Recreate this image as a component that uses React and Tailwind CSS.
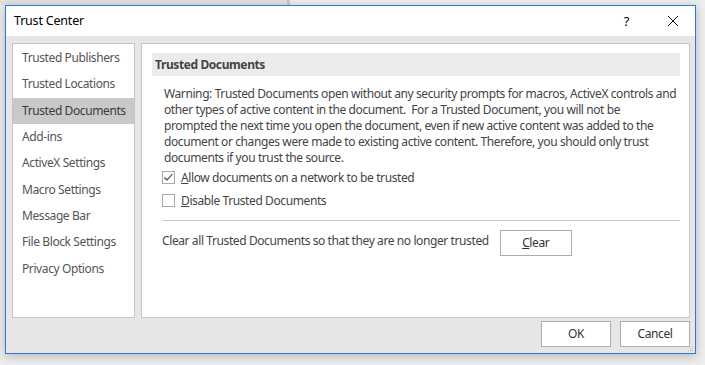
import React from "react";

const navItems = [
  "Trusted Publishers",
  "Trusted Locations",
  "Trusted Documents",
  "Add-ins",
  "ActiveX Settings",
  "Macro Settings",
  "Message Bar",
  "File Block Settings",
  "Privacy Options",
];

const warningLines = [
  "Warning: Trusted Documents open without any security prompts for macros, ActiveX controls and",
  "other types of active content in the document.\u00a0 For a Trusted Document, you will not be",
  "prompted the next time you open the document, even if new active content was added to the",
  "document or changes were made to existing active content. Therefore, you should only trust",
  "documents if you trust the source.",
];

function Checkbox({ checked }) {
  return (
    <span className="w-[13px] h-[13px] border border-[#a8a8a8] bg-white flex items-center justify-center shrink-0">
      {checked && (
        <svg width="11" height="11" viewBox="0 0 11 11">
          <path d="M1.5 5.5 L4 8 L9.5 2" fill="none" stroke="#333" strokeWidth="1.1" />
        </svg>
      )}
    </span>
  );
}

export default function App() {
  return (
    <div
      className="w-[705px] h-[365px] bg-[#efefef] relative overflow-hidden text-[12px] text-[#444] tracking-[-0.4px]"
      style={{ fontFamily: '"Noto Sans", "Segoe UI", sans-serif' }}
    >
      {/* background window hints */}
      <div className="absolute left-0 top-0 w-[290px] h-[5px] bg-[#e2e2e2]" />
      <div className="absolute left-[287px] top-0 w-[3px] h-[5px] bg-[#c8c8c8]" />
      <div className="absolute left-[287px] top-[353px] w-[3px] h-[12px] bg-[#cfcfcf]" />
      <div className="absolute left-0 top-[353px] w-[705px] h-[12px] bg-[#eeeeee]" />

      <div className="absolute left-[5px] top-[5px] w-[691px] h-[349px] border border-[#2b7bd4] bg-[#e6e6e6] flex flex-col shadow-[0_2px_10px_rgba(0,0,0,0.25)]">
        {/* title bar */}
        <div className="h-[30px] bg-white flex items-center pl-[8px] shrink-0">
          <span className="text-[12.5px] text-black tracking-[-0.2px]">Trust Center</span>
          <span className="ml-auto text-[13px] text-black mr-[38px] mt-[1px]">?</span>
          <svg width="12" height="12" viewBox="0 0 12 12" className="mr-[16px]">
            <path d="M1 1 L11 11 M11 1 L1 11" stroke="#111" strokeWidth="1" />
          </svg>
        </div>

        {/* body */}
        <div className="flex flex-col flex-1 pl-[6px] pr-[5px] pt-[7px] pb-[6px]">
          <div className="flex gap-[6px] h-[275px]">
            {/* nav */}
            <div className="w-[123px] h-full bg-white border border-[#c4c4c4] pt-[1px]">
              {navItems.map((item, i) => (
                <div
                  key={item}
                  className={
                    "h-[26.3px] flex items-center pl-[9px] text-[12px] whitespace-nowrap " +
                    (i === 2 ? "bg-[#c9c9c9] text-[#3a3a3a]" : "text-[#555]")
                  }
                >
                  {item}
                </div>
              ))}
            </div>

            {/* content */}
            <div className="flex-1 h-full bg-white border border-[#c4c4c4] pt-[9px] pl-[10px] pr-[9px]">
              <div className="h-[23px] bg-[#ebebeb] flex items-center pl-[3px] font-bold text-[12px] text-[#444]">
                Trusted Documents
              </div>
              <div className="pl-[12px] pt-[10px] leading-[16px] text-[12px] text-[#444]">
                {warningLines.map((l) => (
                  <div key={l} className="whitespace-nowrap">{l}</div>
                ))}
              </div>
              <div className="pl-[10px] flex flex-col">
                <div className="h-[23px] flex items-center gap-[6px]">
                  <Checkbox checked />
                  <span><span className="underline">A</span>llow documents on a network to be trusted</span>
                </div>
                <div className="h-[23px] flex items-center gap-[6px]">
                  <Checkbox />
                  <span><span className="underline">D</span>isable Trusted Documents</span>
                </div>
              </div>
              <div className="ml-[10px] mt-[8px] h-[1px] bg-[#c8c8c8]" />
              <div className="pl-[10px] mt-[9px] flex items-start">
                <span className="mt-[2px]">Clear all Trusted Documents so that they are no longer trusted</span>
                <button className="ml-[11px] w-[72px] h-[26px] border border-[#adadad] bg-white text-[12px] text-[#333]">
                  <span className="underline">C</span>lear
                </button>
              </div>
            </div>
          </div>

          {/* footer */}
          <div className="flex justify-end gap-[9px] mt-[3px]">
            <button className="w-[70px] h-[26px] border border-[#adadad] bg-white text-[12px] text-[#333]">OK</button>
            <button className="w-[70px] h-[26px] border border-[#adadad] bg-white text-[12px] text-[#333]">Cancel</button>
          </div>
        </div>
        <svg width="6" height="6" viewBox="0 0 6 6" className="absolute right-[1px] bottom-[1px]">
          <rect x="4" y="0" width="1" height="1" fill="#bbb" />
          <rect x="2" y="2" width="1" height="1" fill="#bbb" />
          <rect x="4" y="2" width="1" height="1" fill="#bbb" />
          <rect x="0" y="4" width="1" height="1" fill="#bbb" />
          <rect x="2" y="4" width="1" height="1" fill="#bbb" />
          <rect x="4" y="4" width="1" height="1" fill="#bbb" />
        </svg>
      </div>
    </div>
  );
}
